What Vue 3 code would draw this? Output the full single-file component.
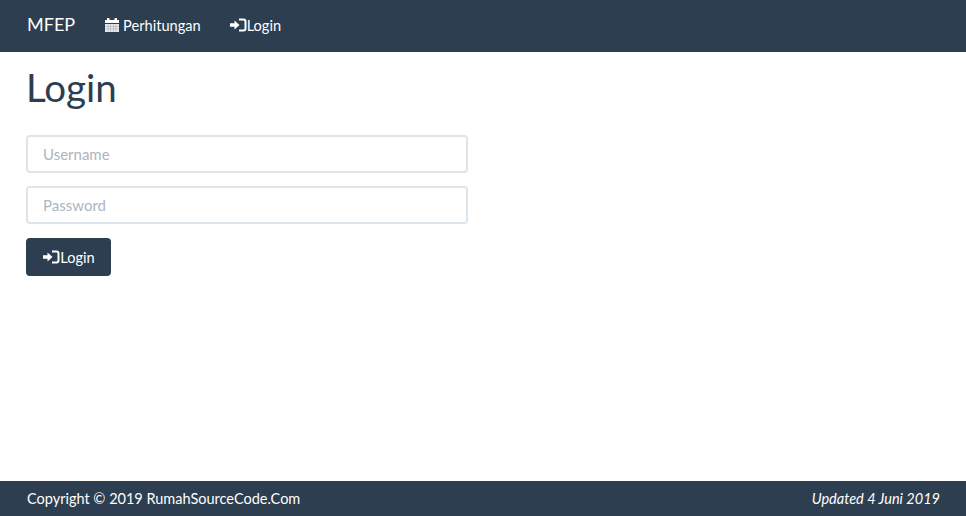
<script setup>
const brand = "MFEP";
</script>

<template>
  <div class="page">
    <!-- Navbar -->
    <nav class="navbar">
      <a class="brand">{{ brand }}</a>
      <a class="nav-link">
        <svg class="icon-cal" viewBox="0 0 14 14" width="14" height="14">
          <path fill="#fff" d="M0 2h2V0h2.500v2h5V0H12v2h2v3H0z" />
          <path fill="#fff" opacity=".9" d="M0 6h14v8H0z" />
          <path stroke="#2c3e50" stroke-width=".2" d="M0 8.500h14M0 11h14M3 6v8M5.500 6v8M8.500 6v8M11 6v8" />
        </svg>
        <span>Perhitungan</span>
      </a>
      <a class="nav-link">
        <svg class="icon-login" viewBox="0 0 17 14" width="17" height="14">
          <path fill="#fff" d="M0 5.200h4.500V2.500L9.500 7l-5 4.500V8.800H0z" />
          <path fill="none" stroke="#fff" stroke-width="2" d="M9 1.500h4.500a2 2 0 0 1 2 2v7a2 2 0 0 1-2 2H9" />
        </svg>Login
      </a>
    </nav>

    <!-- Login form -->
    <main class="content">
      <h1 class="title">Login</h1>
      <form class="login-form" @submit.prevent>
        <input class="field" type="text" placeholder="Username" />
        <input class="field" type="password" placeholder="Password" />
        <button class="btn" type="submit">
          <svg class="icon-login" viewBox="0 0 17 14" width="17" height="14">
            <path fill="#fff" d="M0 5.200h4.500V2.500L9.500 7l-5 4.500V8.800H0z" />
            <path fill="none" stroke="#fff" stroke-width="2" d="M9 1.500h4.500a2 2 0 0 1 2 2v7a2 2 0 0 1-2 2H9" />
          </svg>Login
        </button>
      </form>
    </main>

    <!-- Footer -->
    <footer class="footer">
      <span>Copyright © 2019 RumahSourceCode.Com</span>
      <em>Updated 4 Juni 2019</em>
    </footer>
  </div>
</template>

<style>
body {
  margin: 0;
  background: #fff;
}
</style>

<style scoped>
.page {
  height: 516px;
  display: flex;
  flex-direction: column;
  font-family: Lato, "Open Sans", sans-serif;
  color: #2c3e50;
  overflow: hidden;
}

/* Navbar */
.navbar {
  height: 52px;
  flex: none;
  display: flex;
  align-items: center;
  padding-left: 27px;
  background: #2c3e50;
  color: #fff;
}

.brand {
  font-size: 18px;
  margin-right: 30px;
  margin-bottom: 4px;
}

.nav-link {
  display: flex;
  align-items: center;
  font-size: 14.600px;
  margin-right: 29px;
  margin-bottom: 2px;
}

.icon-cal {
  margin-right: 4px;
}

.icon-login {
  flex: none;
}

/* Content */
.content {
  flex: 1;
  padding: 0 26px;
}

.title {
  font-size: 38.500px;
  font-weight: 400;
  line-height: 42px;
  margin: 14px 0 27px;
}

.login-form {
  width: 442px;
  display: flex;
  flex-direction: column;
  align-items: flex-start;
  gap: 13px;
}

.field {
  width: 100%;
  height: 38px;
  box-sizing: border-box;
  padding: 0 15px;
  border: 2px solid #dce4ec;
  border-radius: 4px;
  font-family: inherit;
  font-size: 15px;
  background: #fff;
  outline: none;
}

.field::placeholder {
  color: #acb6c0;
  opacity: 1;
}

.btn {
  height: 38px;
  width: 85px;
  margin-top: 1px;
  padding: 0 0 0 1px;
  display: flex;
  align-items: center;
  justify-content: center;
  border: none;
  border-radius: 4px;
  background: #2c3e50;
  color: #fff;
  font-family: inherit;
  font-size: 14.600px;
}

/* Footer */
.footer {
  height: 35px;
  flex: none;
  display: flex;
  align-items: center;
  justify-content: space-between;
  padding: 0 26px 0 27px;
  background: #2c3e50;
  color: #fff;
  font-size: 14.500px;
}
</style>
